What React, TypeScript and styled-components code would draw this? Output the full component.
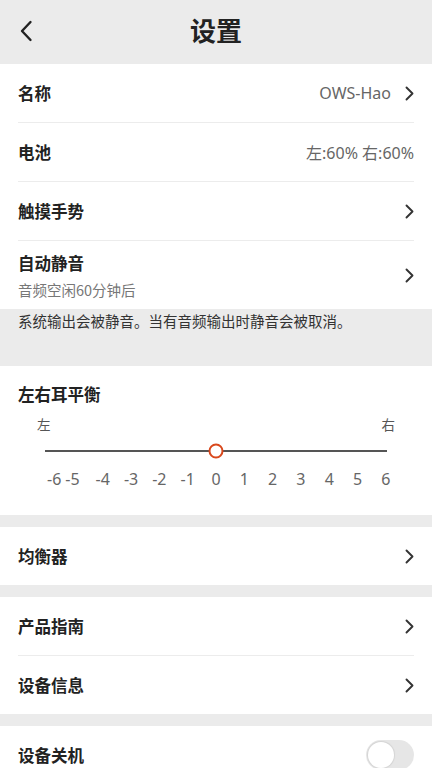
import * as React from 'react'
import styled, { createGlobalStyle } from 'styled-components'

const GlobalStyle = createGlobalStyle`
  html, body {
    margin: 0;
    padding: 0;
    background: #ebebeb;
  }
  body {
    font-family: "Noto Sans", "Noto Sans CJK SC", sans-serif;
    color: #222;
  }
`

const Page = styled.div`
  width: 432px;
  min-height: 768px;
  background: #ebebeb;
  display: flex;
  flex-direction: column;
`

const Header = styled.header`
  height: 64px;
  display: grid;
  grid-template-columns: 64px 1fr 64px;
  align-items: center;
`

const BackButton = styled.button`
  border: 0;
  background: none;
  padding: 0 0 0 19px;
  height: 64px;
  display: flex;
  align-items: center;
  margin-top: -3px;
`

const Title = styled.h1`
  margin: 0;
  text-align: center;
  font-family: "Noto Sans CJK SC", sans-serif;
  font-size: 26px;
  font-weight: 700;
  color: #222;
  margin-top: -6px;
`

const Card = styled.section<{ $gap?: number }>`
  background: #fff;
  margin-top: ${p => p.$gap ?? 0}px;
  display: flex;
  flex-direction: column;
`

const Row = styled.div<{ $height?: number }>`
  height: ${p => p.$height ?? 58}px;
  padding: 0 18px;
  display: flex;
  align-items: center;
  justify-content: space-between;
`

const Divider = styled.div`
  height: 1px;
  margin: 0 18px;
  background: #ececec;
`

const LabelBlock = styled.div`
  display: flex;
  flex-direction: column;
  gap: 4px;
`

const Label = styled.span`
  font-family: "Noto Sans CJK SC", sans-serif;
  font-size: 16.5px;
  font-weight: 700;
  color: #222;
`

const SubLabel = styled.span`
  font-family: "Noto Sans CJK SC", sans-serif;
  font-size: 14.5px;
  color: #777;
`

const Trailing = styled.div`
  display: flex;
  align-items: center;
  gap: 14px;
`

const Value = styled.span`
  font-family: "Noto Sans", "Noto Sans CJK SC", sans-serif;
  font-size: 16px;
  color: #666;
`

const Note = styled.p`
  margin: 0;
  height: 57px;
  padding: 1px 18px 0;
  box-sizing: border-box;
  font-family: "Noto Sans CJK SC", sans-serif;
  font-size: 14.5px;
  line-height: 21px;
  color: #333;
`

const BalanceCard = styled(Card)`
  height: 149px;
  padding: 16px 18px 0;
  box-sizing: border-box;
`

const EndLabels = styled.div`
  display: flex;
  justify-content: space-between;
  padding: 0 19px;
  margin-top: 8px;
  font-family: "Noto Sans CJK SC", sans-serif;
  font-size: 13.5px;
  color: #555;
`

const Track = styled.div`
  position: relative;
  height: 2px;
  margin: 16px 27px 0;
  background: #555;
`

const Thumb = styled.div`
  position: absolute;
  top: 50%;
  width: 11px;
  height: 11px;
  border: 2.5px solid #d9481c;
  border-radius: 50%;
  background: #fff;
  transform: translate(-50%, -50%);
`

const Scale = styled.div`
  display: grid;
  grid-template-columns: repeat(13, 1fr);
  margin: 16px 14px 0;
  font-family: "Noto Sans", sans-serif;
  font-size: 16px;
  color: #666;
`

const Tick = styled.span<{ $nudge?: number }>`
  text-align: center;
  transform: translateX(${p => p.$nudge ?? 0}px);
`

const Toggle = styled.div<{ $on?: boolean }>`
  width: 48px;
  height: 30px;
  border-radius: 15px;
  background: ${p => (p.$on ? '#d9481c' : '#e6e6e6')};
  display: flex;
  align-items: center;
  padding: 2px;
  box-sizing: border-box;
  justify-content: ${p => (p.$on ? 'flex-end' : 'flex-start')};
`

const Knob = styled.div`
  width: 26px;
  height: 26px;
  border-radius: 50%;
  background: #fff;
  box-shadow: 0 0 1px 1px rgba(0, 0, 0, 0.08);
`

const Chevron = () => (
  <svg width="9" height="15" viewBox="0 0 9 15" fill="none">
    <path d="M1.5 1.5 L7.5 7.5 L1.5 13.5" stroke="#333" strokeWidth="1.9" strokeLinecap="round" strokeLinejoin="round" />
  </svg>
)

const BackIcon = () => (
  <svg width="14" height="22" viewBox="0 0 14 22" fill="none">
    <path d="M11.5 2 L3 11 L11.5 20" stroke="#222" strokeWidth="2.4" strokeLinecap="round" strokeLinejoin="round" />
  </svg>
)

const ticks = [-6, -5, -4, -3, -2, -1, 0, 1, 2, 3, 4, 5, 6]

export default function App() {
  const balance = 0
  const pct = ((balance + 6) / 12) * 100

  return (
    <Page>
      <GlobalStyle />
      <Header>
        <BackButton aria-label="返回">
          <BackIcon />
        </BackButton>
        <Title>设置</Title>
        <span />
      </Header>

      <Card>
        <Row>
          <Label>名称</Label>
          <Trailing>
            <Value>OWS-Hao</Value>
            <Chevron />
          </Trailing>
        </Row>
        <Divider />
        <Row>
          <Label>电池</Label>
          <Value>左:60% 右:60%</Value>
        </Row>
        <Divider />
        <Row>
          <Label>触摸手势</Label>
          <Chevron />
        </Row>
        <Divider />
        <Row $height={68}>
          <LabelBlock>
            <Label>自动静音</Label>
            <SubLabel>音频空闲60分钟后</SubLabel>
          </LabelBlock>
          <Chevron />
        </Row>
      </Card>
      <Note>系统输出会被静音。当有音频输出时静音会被取消。</Note>

      <BalanceCard>
        <Label>左右耳平衡</Label>
        <EndLabels>
          <span>左</span>
          <span>右</span>
        </EndLabels>
        <Track>
          <Thumb style={{ left: `${pct}%` }} />
        </Track>
        <Scale>
          {ticks.map(t => (
            <Tick key={t} $nudge={t === -6 ? 8 : t === -5 ? -2 : 0}>
              {t}
            </Tick>
          ))}
        </Scale>
      </BalanceCard>

      <Card $gap={12}>
        <Row>
          <Label>均衡器</Label>
          <Chevron />
        </Row>
      </Card>

      <Card $gap={12}>
        <Row>
          <Label>产品指南</Label>
          <Chevron />
        </Row>
        <Divider />
        <Row>
          <Label>设备信息</Label>
          <Chevron />
        </Row>
      </Card>

      <Card $gap={12}>
        <Row>
          <Label>设备关机</Label>
          <Toggle>
            <Knob />
          </Toggle>
        </Row>
      </Card>
    </Page>
  )
}
